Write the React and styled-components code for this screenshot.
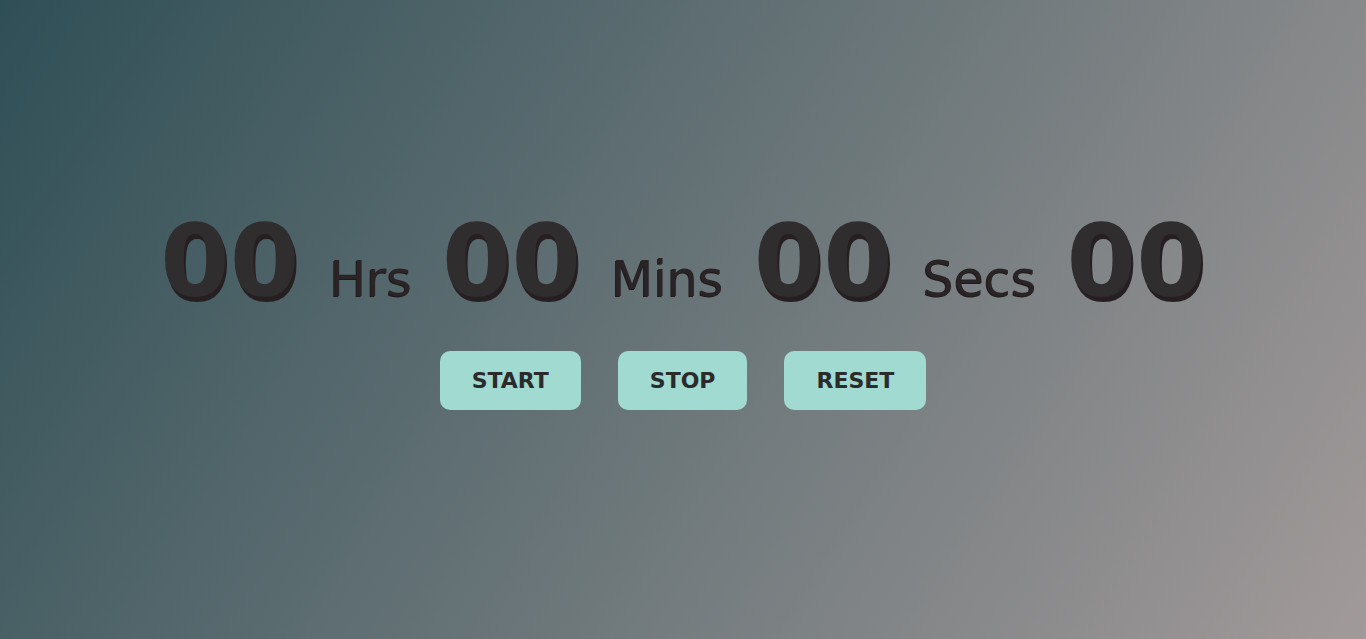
import React from "react";
import styled, { createGlobalStyle } from "styled-components";

const Global = createGlobalStyle`
  html, body { margin: 0; padding: 0; }
  body { font-family: "DejaVu Sans", Verdana, sans-serif; }
`;

const Page = styled.div`
  width: 100%;
  height: 100vh;
  background: linear-gradient(122deg, #2f4f56 0%, #a29a9a 100%);
  display: flex;
  flex-direction: column;
  align-items: center;
  padding-top: 203px;
  box-sizing: border-box;
  overflow: hidden;
`;

const Display = styled.div`
  display: flex;
  align-items: baseline;
  gap: 30px;
`;

const Digits = styled.span`
  font-family: "DejaVu Sans", Verdana, sans-serif;
  font-weight: 700;
  font-size: 100px;
  line-height: normal;
  color: #302d2f;
  text-shadow: 2px 5px 0 #261f21;
`;

const Unit = styled.span`
  font-family: "DejaVu Sans", Verdana, sans-serif;
  font-size: 49px;
  line-height: normal;
  color: #2a2426;
  text-shadow: -1px 1px 0 #1f1a1b;
`;

const Controls = styled.div`
  display: flex;
  gap: 37px;
  margin-top: 31px;
`;

const Button = styled.button`
  font-family: "DejaVu Sans", Verdana, sans-serif;
  font-weight: 700;
  font-size: 22px;
  line-height: normal;
  color: #2b2b2b;
  background: #a0dad0;
  border: none;
  border-radius: 10px;
  padding: 17px 32px;
  cursor: pointer;
`;

export default function App() {
  const parts = [
    ["00", "Hrs"],
    ["00", "Mins"],
    ["00", "Secs"],
    ["00", null],
  ];
  return (
    <>
      <Global />
      <Page>
        <Display>
          {parts.map(([d, u], i) => (
            <React.Fragment key={i}>
              <Digits>{d}</Digits>
              {u && <Unit>{u}</Unit>}
            </React.Fragment>
          ))}
        </Display>
        <Controls>
          <Button>START</Button>
          <Button>STOP</Button>
          <Button>RESET</Button>
        </Controls>
      </Page>
    </>
  );
}
